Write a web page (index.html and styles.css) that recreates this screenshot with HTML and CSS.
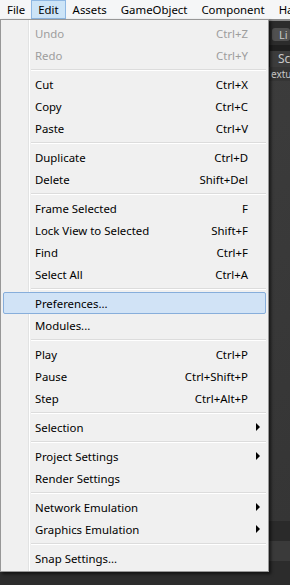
FILE: index.html
```html
<!DOCTYPE html>
<html lang="en">
  <head>
    <meta charset="UTF-8" />
    <title>Edit menu</title>
    <link rel="stylesheet" href="styles.css">
  </head>
  <body>
    <div class="menubar">
      <div class="menubar-item">File</div>
      <div class="menubar-item open">Edit</div>
      <div class="menubar-item">Assets</div>
      <div class="menubar-item">GameObject</div>
      <div class="menubar-item">Component</div>
      <div class="menubar-item">Ha</div>
    </div>

    <!-- editor behind the dropdown -->
    <div class="editor">
      <div class="toolbar">
        <div class="tool-button"><span class="tool-dot"></span>Li</div>
      </div>
      <div class="tabs">
        <div class="tab">Sc</div>
      </div>
      <div class="scene-bar">extu</div>
      <div class="scene"></div>
      <div class="band dark"></div>
      <div class="band mid"></div>
      <div class="band low"></div>
    </div>

    <div class="dropdown">
      <div class="row disabled"><span class="label">Undo</span><span class="key">Ctrl+Z</span></div>
      <div class="row disabled"><span class="label">Redo</span><span class="key">Ctrl+Y</span></div>
      <div class="sep"></div>
      <div class="row"><span class="label">Cut</span><span class="key">Ctrl+X</span></div>
      <div class="row"><span class="label">Copy</span><span class="key">Ctrl+C</span></div>
      <div class="row"><span class="label">Paste</span><span class="key">Ctrl+V</span></div>
      <div class="sep"></div>
      <div class="row"><span class="label">Duplicate</span><span class="key">Ctrl+D</span></div>
      <div class="row"><span class="label">Delete</span><span class="key">Shift+Del</span></div>
      <div class="sep"></div>
      <div class="row"><span class="label">Frame Selected</span><span class="key">F</span></div>
      <div class="row"><span class="label">Lock View to Selected</span><span class="key">Shift+F</span></div>
      <div class="row"><span class="label">Find</span><span class="key">Ctrl+F</span></div>
      <div class="row"><span class="label">Select All</span><span class="key">Ctrl+A</span></div>
      <div class="sep"></div>
      <div class="row hover"><span class="label">Preferences...</span><span class="key"></span></div>
      <div class="row"><span class="label">Modules...</span><span class="key"></span></div>
      <div class="sep"></div>
      <div class="row"><span class="label">Play</span><span class="key">Ctrl+P</span></div>
      <div class="row"><span class="label">Pause</span><span class="key">Ctrl+Shift+P</span></div>
      <div class="row"><span class="label">Step</span><span class="key">Ctrl+Alt+P</span></div>
      <div class="sep"></div>
      <div class="row sub"><span class="label">Selection</span><span class="key"></span></div>
      <div class="sep"></div>
      <div class="row sub"><span class="label">Project Settings</span><span class="key"></span></div>
      <div class="row"><span class="label">Render Settings</span><span class="key"></span></div>
      <div class="sep"></div>
      <div class="row sub"><span class="label">Network Emulation</span><span class="key"></span></div>
      <div class="row sub"><span class="label">Graphics Emulation</span><span class="key"></span></div>
      <div class="sep"></div>
      <div class="row"><span class="label">Snap Settings...</span><span class="key"></span></div>
    </div>
  </body>
</html>
```

FILE: styles.css
```css
body {
  margin: 0;
  width: 290px;
  height: 585px;
  overflow: hidden;
  position: relative;
  font-family: "Noto Sans", "Open Sans", sans-serif;
  font-size: 11.4px;
  background-color: #303030;
}
.menubar {
  display: flex;
  height: 19px;
  background-color: #f5f6f7;
  white-space: nowrap;
  overflow: hidden;
}
.menubar-item {
  padding: 0 6px;
  line-height: 17px;
  border: 1px solid transparent;
  color: #000;
}
.menubar-item:first-child {
  padding-right: 5px;
}
.menubar-item.open {
  background-color: #cce4f7;
  border-color: #8fb8e3;
}
.editor {
  color: #c8c8c8;
  font-size: 11px;
  overflow: hidden;
}
.toolbar {
  height: 26px;
  background-color: #2c2c2c;
  border-top: 2px solid #8a8a8a;
  padding: 7px 0 0 272px;
  box-sizing: border-box;
}
.tool-button {
  display: flex;
  align-items: center;
  gap: 3px;
  height: 13px;
  padding: 0 4px;
  background-color: #505050;
  border-radius: 3px;
  white-space: nowrap;
  line-height: 13px;
}
.tool-dot {
  width: 6px;
  height: 6px;
  border-radius: 50%;
  background-color: #a33;
}
.tabs {
  height: 22px;
  background-color: #1f1f1f;
  padding: 6px 0 0 270px;
  box-sizing: border-box;
}
.tab {
  height: 16px;
  padding-left: 8px;
  line-height: 15px;
  background-color: #3c3c3c;
  white-space: nowrap;
  font-size: 12px;
}
.scene-bar {
  height: 14px;
  background-color: #353535;
  padding-left: 271px;
  line-height: 14px;
  white-space: nowrap;
  font-size: 10px;
}
.scene {
  height: 440px;
  background: linear-gradient(160deg, #3d3d3d, #353535);
}
.band {
  height: 20px;
}
.band.dark {
  background-color: #2a2a2a;
}
.band.mid {
  background-color: #3a3a3a;
}
.band.low {
  height: 40px;
  background-color: #2c2c2c;
}
.dropdown {
  position: absolute;
  left: 0;
  top: 19px;
  width: 269px;
  box-sizing: border-box;
  padding: 2px;
  border: 1px solid #979797;
  background-color: #f0f0f0;
  background-image: linear-gradient(to right, transparent 27px, #e2e3e3 27px, #e2e3e3 28px, #fff 28px, #fff 29px, transparent 29px);
  box-shadow: 2px 2px 3px rgba(0, 0, 0, 0.6);
  color: #000;
}
.row {
  display: grid;
  grid-template-columns: 1fr auto 17px;
  align-items: center;
  height: 22px;
  padding-left: 32px;
  box-sizing: border-box;
  white-space: nowrap;
  border: 1px solid transparent;
  border-radius: 2px;
}
.row .label {
  margin-left: -1px;
}
.row.disabled {
  color: #9d9d9d;
}
.row.hover {
  background-color: #d1e3f6;
  border-color: #87aedb;
}
.row.sub::after {
  content: "";
  justify-self: center;
  margin-left: 2px;
  border-top: 4px solid transparent;
  border-bottom: 4px solid transparent;
  border-left: 4px solid #000;
}
.sep {
  height: 0;
  margin: 3px 0 2px 28px;
  border-top: 1px solid #dcdcdc;
  border-bottom: 1px solid #fff;
}
```
